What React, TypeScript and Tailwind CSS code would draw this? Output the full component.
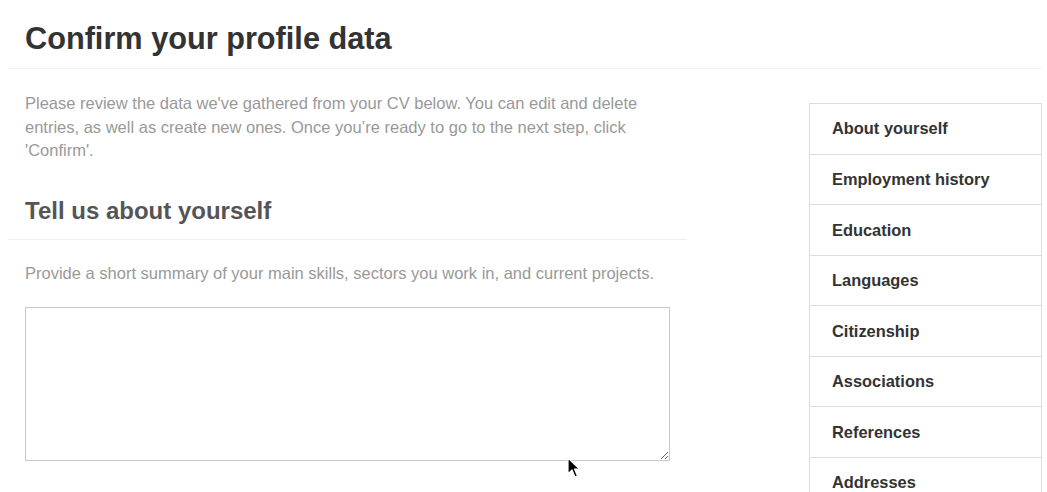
import React from "react";

const items = [
  "About yourself",
  "Employment history",
  "Education",
  "Languages",
  "Citizenship",
  "Associations",
  "References",
  "Addresses",
];

export default function App() {
  return (
    <div className="relative w-[1047px] h-[492px] overflow-hidden bg-white font-['Liberation_Sans',Arial,sans-serif]">
      <header className="mx-2 w-[1034px] border-b border-[#eeeeee] pt-[21px] pb-[11px] pl-[17px]">
        <h1 className="text-[30.7px] leading-[36px] font-bold text-[#333333]">Confirm your profile data</h1>
      </header>
      <div className="flex">
        <main className="ml-2 w-[679px]">
          <p className="mt-[23px] px-[17px] text-[16.5px] leading-[23.5px] text-[#999999]">
            Please review the data we've gathered from your CV below. You can edit and delete entries, as well as create new ones. Once you’re ready to go to the next step, click 'Confirm'.
          </p>
          <div className="mt-[33px] border-b border-[#eeeeee] pb-[13px] pl-[17px]">
            <h2 className="text-[24px] leading-[30px] font-bold text-[#555555]">Tell us about yourself</h2>
          </div>
          <p className="mt-[22px] px-[17px] text-[16.5px] leading-[23.5px] text-[#999999] whitespace-nowrap">
            Provide a short summary of your main skills, sectors you work in, and current projects.
          </p>
          <div className="mt-[22px] pl-[17px]">
            <textarea className="block w-[645px] h-[154px] border border-[#c8c8c8] bg-white outline-none resize" />
          </div>
        </main>
        <aside className="ml-[122px] mt-[34px] w-[233px] border-x border-[#dddddd]">
          {items.map((t) => (
            <div
              key={t}
              className="box-border flex h-[50.57px] items-center border-t border-[#dddddd] pl-[22px] text-[16.4px] font-bold text-[#333333]"
            >
              {t}
            </div>
          ))}
        </aside>
      </div>
      <svg className="absolute left-[567px] top-[457px]" width="14" height="22" viewBox="0 0 14 22">
        <path d="M1 1 L1 17 L5 13 L8 20 L10.5 19 L7.5 12 L12.5 12 Z" fill="#000" stroke="#fff" strokeWidth="1.2" strokeLinejoin="round" />
      </svg>
    </div>
  );
}
